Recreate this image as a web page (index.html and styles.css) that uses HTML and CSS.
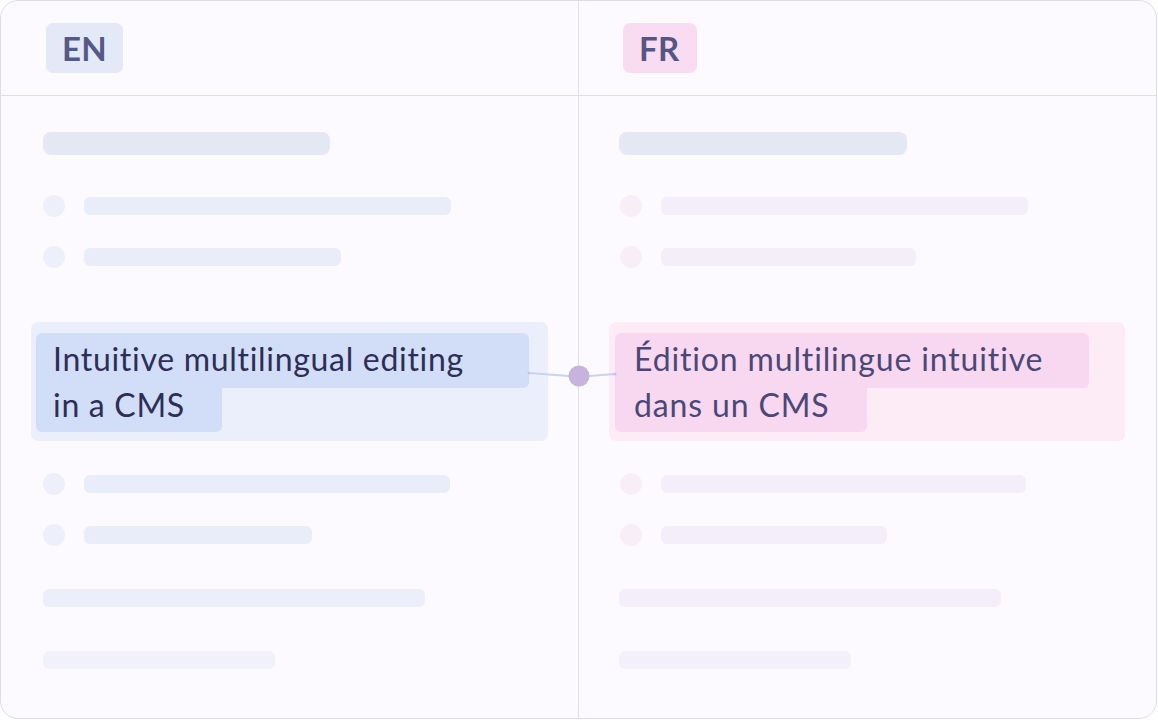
FILE: index.html
```html
<!DOCTYPE html>
<html lang="en">
<head>
<meta charset="utf-8">
<title>Multilingual editing</title>
<link rel="stylesheet" href="styles.css">
</head>
<body>
<div class="card">
  <section class="col col-en">
    <header class="col-head"><span class="badge badge-en">EN</span></header>
    <div class="col-body">
      <div class="sk-title"></div>
      <div class="sk-row"><span class="dot"></span><span class="bar w367"></span></div>
      <div class="sk-row gap"><span class="dot"></span><span class="bar w257"></span></div>
      <div class="hl">
        <div class="hl-line l1">Intuitive multilingual editing</div>
        <div class="hl-line l2">in a CMS</div>
      </div>
      <div class="sk-row after-hl"><span class="dot"></span><span class="bar w366"></span></div>
      <div class="sk-row gap"><span class="dot"></span><span class="bar w228"></span></div>
      <div class="sk-bar b5"></div>
      <div class="sk-bar b6"></div>
    </div>
  </section>
  <section class="col col-fr">
    <header class="col-head"><span class="badge badge-fr">FR</span></header>
    <div class="col-body">
      <div class="sk-title"></div>
      <div class="sk-row"><span class="dot"></span><span class="bar w367"></span></div>
      <div class="sk-row gap"><span class="dot"></span><span class="bar w255"></span></div>
      <div class="hl">
        <div class="hl-line l1">Édition multilingue intuitive</div>
        <div class="hl-line l2">dans un CMS</div>
      </div>
      <div class="sk-row after-hl"><span class="dot"></span><span class="bar w365"></span></div>
      <div class="sk-row gap"><span class="dot"></span><span class="bar w226"></span></div>
      <div class="sk-bar b5"></div>
      <div class="sk-bar b6"></div>
    </div>
  </section>
  <svg class="link" width="100" height="30" viewBox="0 0 100 30" aria-hidden="true">
    <line x1="4" y1="11" x2="44" y2="14" stroke="#c7d3f1" stroke-width="2.2" stroke-linecap="round"/>
    <line x1="64" y1="14" x2="90" y2="12" stroke="#c7d3f1" stroke-width="2.2" stroke-linecap="round"/>
    <circle cx="4" cy="11" r="1.6" fill="#d8bfe0"/>
    <circle cx="90" cy="12" r="1.6" fill="#b9c9ee"/>
    <circle cx="54" cy="14" r="10.5" fill="#c7b4dc"/>
  </svg>
</div>
</body>
</html>
```
FILE: styles.css
```css
html, body {
  margin: 0;
  padding: 0;
  background: #ffffff;
}
body {
  font-family: Lato, "Open Sans", sans-serif;
}
.card {
  position: relative;
  width: 1157px;
  height: 719px;
  box-sizing: border-box;
  border: 1px solid #dedcec;
  border-radius: 18px;
  background: #fcfaff;
  display: grid;
  grid-template-columns: 578px 1fr;
  overflow: hidden;
}
.col-en {
  border-right: 1px solid #e0deee;
}
.col-head {
  height: 94px;
  border-bottom: 1px solid #e0deee;
  display: flex;
  align-items: center;
}
.col-en .col-head { padding-left: 45px; }
.col-fr .col-head { padding-left: 44px; }
.badge {
  display: inline-flex;
  align-items: center;
  height: 50px;
  padding: 0 16px;
  border-radius: 7px;
  font-weight: 700;
  font-size: 33px;
  letter-spacing: 0.3px;
}
.badge-en { background: #e4e9f7; color: #55588a; }
.badge-fr { background: #f9dcf1; color: #565685; padding: 0 17px 0 16px; }

.col-body {
  padding-top: 36px;
  display: flex;
  flex-direction: column;
  align-items: flex-start;
}
.col-en .col-body { padding-left: 42px; }
.col-fr .col-body { padding-left: 41px; }

.sk-title {
  width: 287px;
  height: 23px;
  border-radius: 8px;
  background: #e4e8f5;
  margin-bottom: 40px;
}
.col-fr .sk-title { margin-left: -1px; width: 288px; }
.sk-row {
  display: flex;
  align-items: center;
  gap: 19px;
  height: 22px;
}
.sk-row.gap { margin-top: 29px; }
.sk-row.after-hl { margin-top: 32px; }
.dot {
  width: 22px;
  height: 22px;
  border-radius: 50%;
}
.bar {
  height: 18px;
  border-radius: 6px;
}
.col-en .dot { background: #edf0fb; }
.col-en .bar { background: #e9edfa; }
.col-fr .dot { background: #f8eef8; }
.col-fr .bar { background: #f4eefa; }
.w367 { width: 367px; }
.w366 { width: 366px; }
.w365 { width: 365px; }
.w257 { width: 257px; }
.w255 { width: 255px; }
.w228 { width: 228px; }
.w226 { width: 226px; }

.sk-bar {
  height: 18px;
  border-radius: 6px;
}
.sk-bar.b5 { width: 382px; margin-top: 43px; }
.sk-bar.b6 { width: 232px; margin-top: 44px; }
.col-fr .sk-bar { margin-left: -1px; }
.col-en .b5 { background: #eceefa; }
.col-en .b6 { background: #f1f1fc; }
.col-fr .b5 { background: #f3eefa; }
.col-fr .b6 { background: #f3f0fb; }

.hl {
  align-self: stretch;
  margin-top: 54px;
  height: 119px;
  box-sizing: border-box;
  padding: 11px 6px 0 5px;
  border-radius: 7px;
  display: flex;
  flex-direction: column;
  align-items: flex-start;
}
.col-en .hl { margin-left: -12px; margin-right: 30px; background: #ebeffb; }
.col-fr .hl { margin-left: -11px; margin-right: 31px; background: #fdebf6; padding-left: 6px; }
.hl-line {
  box-sizing: border-box;
  padding-left: 17px;
  font-size: 32px;
  white-space: nowrap;
  letter-spacing: 0.7px;
  font-variant-ligatures: none;
}
.col-en .hl-line { background: #d2ddf7; color: #2c2e58; }
.col-fr .hl-line { background: #f8d8f1; color: #4b4878; padding-left: 19px; letter-spacing: 0.85px; }
.hl-line.l1 {
  height: 55px;
  line-height: 46px;
  padding-top: 3px;
  border-radius: 6px 6px 6px 0;
}
.hl-line.l2 {
  height: 44px;
  line-height: 34px;
  border-radius: 0 0 6px 6px;
}
.col-en .l1 { width: 493px; }
.col-en .l2 { width: 186px; }
.col-fr .l1 { width: 474px; }
.col-fr .l2 { width: 252px; }

.link {
  position: absolute;
  left: 524px;
  top: 361px;
}
```
